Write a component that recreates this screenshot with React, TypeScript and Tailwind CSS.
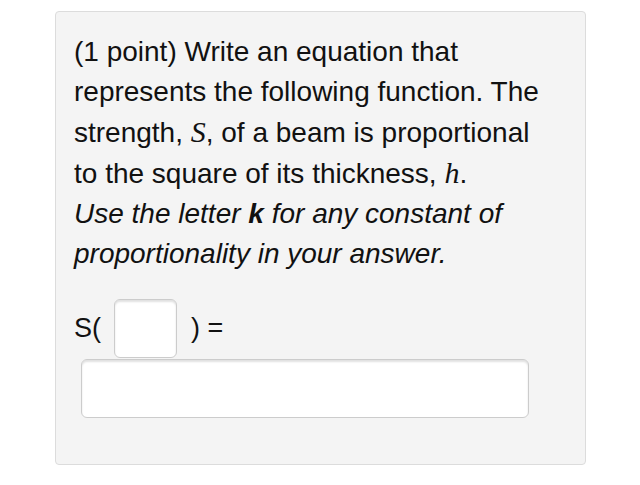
const App = () => {
  return (
    <div className="w-[640px] h-[485px] bg-white pt-[11px] pl-[55px]" style={{ fontFamily: '"Liberation Sans", Arial, sans-serif' }}>
      <div className="w-[531px] h-[454px] bg-[#f4f4f4] border border-[#dcdcdc] rounded-[4px] pt-[20px] pl-[18px]">
        <div className="text-[28px] leading-[40px] text-[#111] whitespace-nowrap">
          <p>
            (1 point) Write an equation that
            <br />
            represents the following function. The
            <br />
            strength,{" "}
            <span className="italic text-[30px]" style={{ fontFamily: '"Liberation Serif", serif' }}>S</span>, of a beam is proportional
            <br />
            to the square of its thickness,{" "}
            <span className="italic text-[30px]" style={{ fontFamily: '"Liberation Serif", serif' }}>h</span>.
          </p>
          <p className="italic">
            Use the letter <b>k</b> for any constant of
            <br />
            proportionality in your answer.
          </p>
        </div>
        <div className="flex items-center mt-[25px] text-[27px] text-[#111]">
          <span>S(</span>
          <input className="ml-[13px] w-[63px] h-[59px] bg-white border border-[#ccc] rounded-[6px] shadow-[inset_0_2px_2px_rgba(0,0,0,0.12)]" />
          <span className="ml-[14px]">) =</span>
        </div>
        <input className="block ml-[7px] mt-[1px] w-[448px] h-[59px] bg-white border border-[#ccc] rounded-[6px] shadow-[inset_0_2px_2px_rgba(0,0,0,0.12)]" />
      </div>
    </div>
  )
}

export default App
